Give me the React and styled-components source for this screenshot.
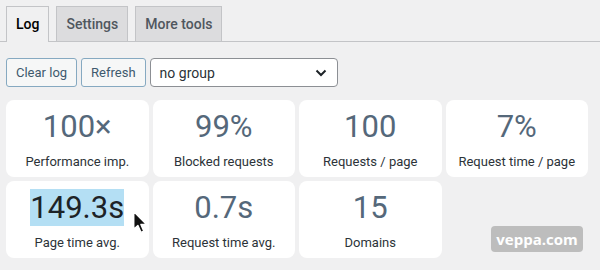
import React from 'react'
import styled, { createGlobalStyle } from 'styled-components'

const Global = createGlobalStyle`
  html, body { margin: 0; padding: 0; background: #f0f0f1; }
  body { font-family: Roboto, "Liberation Sans", sans-serif; color: #2c3338; }
`

const Page = styled.div`
  position: relative;
  width: 600px;
  height: 270px;
  overflow: hidden;
`

const TabBar = styled.div`
  display: flex;
  gap: 7px;
  padding: 6px 0 0 6px;
  border-bottom: 1px solid #c3c4c7;
  height: 35px;
  box-sizing: content-box;
`

const Tab = styled.div`
  box-sizing: border-box;
  height: ${(p) => (p.$active ? '36px' : '35px')};
  padding: 0 9px;
  border: 1px solid #c3c4c7;
  border-bottom: none;
  background: ${(p) => (p.$active ? '#f0f0f1' : '#dcdcde')};
  color: ${(p) => (p.$active ? '#000' : '#50575e')};
  font-size: 14px;
  font-weight: 500;
  line-height: 34px;
`

const Content = styled.div`
  padding: 16px 12px 0 6px;
`

const Toolbar = styled.div`
  display: flex;
  gap: 4px;
  height: 29px;
`

const Button = styled.button`
  box-sizing: border-box;
  height: 29px;
  padding: 0 9px;
  border: 1px solid #86a9c1;
  border-radius: 3px;
  background: #f6f7f7;
  color: #3e5a6e;
  font-family: inherit;
  font-size: 13px;
`

const Select = styled.div`
  box-sizing: border-box;
  width: 188px;
  height: 29px;
  display: flex;
  align-items: center;
  justify-content: space-between;
  padding: 0 10px 0 9px;
  border: 1px solid #8c8f94;
  border-radius: 4px;
  background: #fff;
  font-size: 14px;
  color: #2c3338;
`

const Grid = styled.div`
  margin-top: 13px;
  display: grid;
  grid-template-columns: repeat(4, 1fr);
  gap: 4px;
  width: 582px;
`

const Card = styled.div`
  position: relative;
  height: 77px;
  box-sizing: border-box;
  padding-top: 8px;
  background: #fff;
  border-radius: 8px;
  display: flex;
  flex-direction: column;
  align-items: center;
`

const Value = styled.span`
  font-size: 31px;
  line-height: 37px;
  color: ${(p) => (p.$selected ? '#1d2327' : '#55687a')};
  background: ${(p) => (p.$selected ? '#b4dff4' : 'transparent')};
`

const Label = styled.div`
  margin-top: 8px;
  font-size: 13px;
  line-height: 18px;
  color: #2c3338;
`

const Cursor = styled.svg`
  position: absolute;
  left: 126px;
  top: 29px;
`

const Watermark = styled.div`
  position: absolute;
  left: 491px;
  top: 226px;
  width: 92px;
  height: 26px;
  border-radius: 4px;
  background: #bdbdbd;
  color: #fff;
  font-family: "Open Sans", "Liberation Sans", sans-serif;
  font-weight: 700;
  font-size: 15px;
  line-height: 26px;
  text-align: center;
`

const stats = [
  { value: '100×', label: 'Performance imp.' },
  { value: '99%', label: 'Blocked requests' },
  { value: '100', label: 'Requests / page' },
  { value: '7%', label: 'Request time / page' },
  { value: '149.3s', label: 'Page time avg.', selected: true },
  { value: '0.7s', label: 'Request time avg.' },
  { value: '15', label: 'Domains' },
]

export default function App() {
  return (
    <Page>
      <Global />
      <TabBar>
        <Tab $active>Log</Tab>
        <Tab>Settings</Tab>
        <Tab>More tools</Tab>
      </TabBar>
      <Content>
        <Toolbar>
          <Button>Clear log</Button>
          <Button>Refresh</Button>
          <Select>
            <span>no group</span>
            <svg width="12" height="8" viewBox="0 0 12 8">
              <path d="M1.5 1.5 L6 6 L10.5 1.5" fill="none" stroke="#1d2327" strokeWidth="2" />
            </svg>
          </Select>
        </Toolbar>
        <Grid>
          {stats.map((s) => (
            <Card key={s.label}>
              <Value $selected={s.selected}>{s.value}</Value>
              <Label>{s.label}</Label>
              {s.selected && (
                <Cursor width="17" height="25" viewBox="0 0 16 24">
                  <path
                    d="M1.5 1.5 L1.5 18.5 L5.5 14.8 L8.4 21.5 L11.2 20.3 L8.4 13.8 L13.8 13.8 Z"
                    fill="#111"
                    stroke="#fff"
                    strokeWidth="1.4"
                    strokeLinejoin="round"
                  />
                </Cursor>
              )}
            </Card>
          ))}
        </Grid>
      </Content>
      <Watermark>veppa.com</Watermark>
    </Page>
  )
}
